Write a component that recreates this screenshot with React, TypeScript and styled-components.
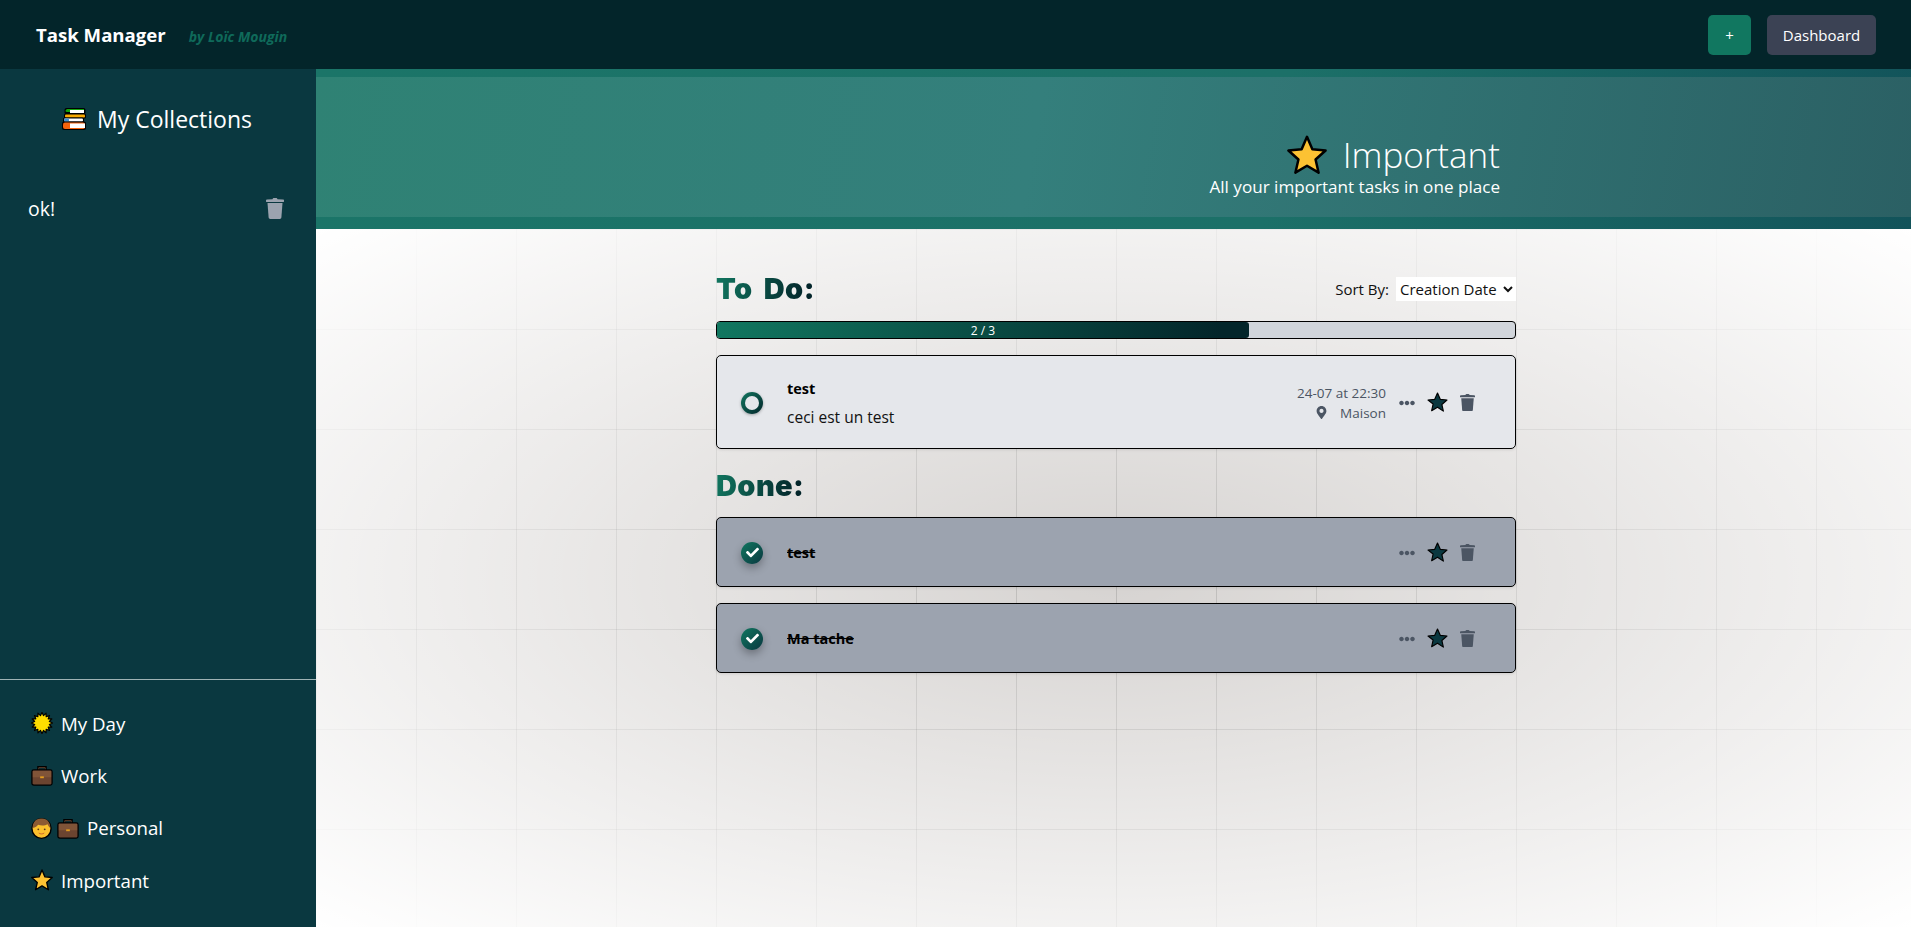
import React from 'react'
import styled, { createGlobalStyle } from 'styled-components'
import { FaEllipsisH, FaMapMarkerAlt, FaCheck } from 'react-icons/fa'

const GlobalStyle = createGlobalStyle`
  html, body {
    margin: 0;
    padding: 0;
    height: 100%;
    overflow: hidden;
    font-family: "Open Sans", "Noto Sans", sans-serif;
  }
  * {
    box-sizing: border-box;
  }
`

const TrashIcon = ({ size = 18 }: { size?: number }) => (
  <svg width={size} height={size * 1.17} viewBox="0 0 18 21" fill="currentColor">
    <path d="M6.500 1.200C6.700.5 7.200 0 8 0h2c.8 0 1.300.5 1.500 1.200L17 1.600c.6 0 1 .4 1 .9v1c0 .2-.2.4-.4.4H.4C.2 3.900 0 3.700 0 3.500v-1c0-.5.4-.9 1-.9z" />
    <path d="M1.500 5h15l-1.100 14.200c-.1 1-.9 1.800-1.900 1.800h-9c-1 0-1.800-.8-1.900-1.800z" />
  </svg>
)

const StarIcon = ({ size = 23 }: { size?: number }) => (
  <svg width={size} height={size} viewBox="0 0 24 24">
    <path
      d="M12 2.200l2.900 6.500 7 .7-5.300 4.700 1.500 6.900L12 16.900l-6.100 3.600 1.500-6.900L2.100 9.400l7-.7z"
      fill="#0a3840"
      stroke="#000"
      strokeWidth="1.200"
      strokeLinejoin="round"
    />
  </svg>
)

const EmojiStar = ({ size = 22 }: { size?: number }) => (
  <svg width={size} height={size} viewBox="0.800 0.800 22.400 22.400">
    <path
      d="M12 1.800l3 7 7.400.7-5.600 5 1.700 7.400-6.500-3.900-6.500 3.900 1.700-7.400-5.600-5 7.400-.7z"
      fill="#fcc233"
      stroke="#000"
      strokeWidth="1.400"
      strokeLinejoin="round"
    />
  </svg>
)

const sunPoints = Array.from({ length: 32 }, (_, i) => {
  const radius = i % 2 === 0 ? 11.6 : 8.2
  const angle = (i * Math.PI) / 16
  return `${(12 + radius * Math.sin(angle)).toFixed(2)},${(12 - radius * Math.cos(angle)).toFixed(2)}`
}).join(' ')

const EmojiSun = () => (
  <svg width={22} height={22} viewBox="0 0 24 24">
    <polygon points={sunPoints} fill="#ffdd00" stroke="#000" strokeWidth="1.300" strokeLinejoin="round" />
  </svg>
)

const EmojiBriefcase = () => (
  <svg width={22} height={22} viewBox="0 0 24 24">
    <path d="M8 7V3.500h8V7" fill="none" stroke="#000" strokeWidth="2.400" />
    <path d="M8.500 7V4h7v3" fill="none" stroke="#6a4530" strokeWidth="1" />
    <rect x="1" y="6.500" width="22" height="16.500" rx="2" fill="#6b4430" stroke="#000" strokeWidth="1.400" />
    <rect x="2" y="7.500" width="20" height="7" fill="#805438" />
    <rect x="10" y="13.500" width="4" height="2" fill="#e39c1d" />
  </svg>
)

const EmojiBoy = () => (
  <svg width={21} height={22} viewBox="0 0 23 24">
    <ellipse cx="11.500" cy="12.500" rx="10.500" ry="10.800" fill="#fbc02d" stroke="#000" strokeWidth="1.500" />
    <path d="M1.800 12C1.800 5 6 1.600 11.500 1.600S21.200 5 21.200 12c-1.500-.7-2.500-2.500-3-4-3 1.700-7.500 1.700-10.500.5-.8 1.500-3 3.100-5.900 3.500z" fill="#8d5a33" />
    <circle cx="8" cy="13.500" r="1" fill="#5d3a1e" />
    <circle cx="15" cy="13.500" r="1" fill="#5d3a1e" />
    <path d="M8.500 17.500c1.800 1.300 4.200 1.300 6 0" fill="none" stroke="#c9612c" strokeWidth="1" />
  </svg>
)

const EmojiBooks = () => (
  <svg width={24} height={24} viewBox="0 0 24 24">
    <rect x="2.500" y="1" width="21" height="6.500" rx="2" fill="#000" />
    <path d="M3.500 4c0-1 .8-2 2-2H22v1.200H8v1.800H5.500C4.500 5 3.500 4.800 3.500 4z" fill="#13a10e" />
    <rect x="8" y="3" width="14" height="3" fill="#fff" />
    <rect x="2" y="6.500" width="22" height="5" rx="1.500" fill="#000" />
    <rect x="3" y="7.500" width="20" height="3" rx="1" fill="#f7a800" />
    <rect x="1" y="10.500" width="21" height="5" rx="1.500" fill="#000" />
    <rect x="2" y="11.500" width="19" height="3" rx="1" fill="#fff" />
    <rect x="2" y="11.500" width="5" height="3" rx="1" fill="#3f8fd2" />
    <rect x="0" y="14.500" width="24" height="8.500" rx="2" fill="#000" />
    <rect x="1" y="15.500" width="22" height="6.500" rx="2" fill="#f7630c" />
    <rect x="8" y="16.500" width="15" height="4.500" fill="#fff" />
  </svg>
)

const Page = styled.div`
  display: flex;
  flex-direction: column;
  width: 100%;
  height: 927px;
  overflow: hidden;
`

const Navbar = styled.header`
  height: 69px;
  flex: none;
  display: flex;
  align-items: center;
  justify-content: space-between;
  padding: 0 35px 0 36px;
  background-color: #03252a;
`

const Brand = styled.div`
  display: flex;
  align-items: baseline;
  gap: 23px;
`

const BrandTitle = styled.span`
  color: #fff;
  font-size: 18.600px;
  font-weight: 700;
`

const BrandBy = styled.span`
  color: #0f6a5a;
  font-size: 14px;
  font-weight: 700;
  font-style: italic;
`

const NavActions = styled.div`
  display: flex;
  gap: 16px;
`

const NavButton = styled.button<{ $variant: 'add' | 'link' }>`
  height: 40px;
  width: ${(props) => (props.$variant === 'add' ? '43px' : '109px')};
  padding: 0;
  border: none;
  border-radius: 5px;
  color: #fff;
  font-family: inherit;
  font-size: 15px;
  background-color: ${(props) => (props.$variant === 'add' ? '#117760' : '#3b4254')};
`

const Body = styled.div`
  flex: 1;
  display: flex;
  min-height: 0;
`

const Sidebar = styled.aside`
  width: 316px;
  flex: none;
  display: flex;
  flex-direction: column;
  background-color: #0a3840;
  color: #fff;
`

const SidebarTop = styled.div`
  flex: 1;
  padding: 0 28px;
`

const CollectionsTitle = styled.h2`
  display: flex;
  align-items: center;
  justify-content: center;
  gap: 11px;
  margin: 0;
  padding: 10px 2px 0 0;
  height: 90px;
  font-size: 23px;
  font-weight: 400;
`

const CollectionRow = styled.div`
  display: flex;
  align-items: center;
  justify-content: space-between;
  margin-top: 36px;
  padding-right: 4px;
  font-size: 19.500px;
  color: #fff;
`

const CollectionTrash = styled.span`
  display: flex;
  color: #9ca3af;
`

const SidebarBottom = styled.nav`
  height: 248px;
  flex: none;
  border-top: 1px solid #9fb3b5;
  padding: 17px 0 0 31px;
  display: flex;
  flex-direction: column;
`

const NavItem = styled.div`
  height: 52.300px;
  display: flex;
  align-items: center;
  gap: 8px;
  font-size: 18.700px;
`

const NavIcons = styled.span`
  display: flex;
  gap: 5px;
`

const Main = styled.main`
  flex: 1;
  min-width: 0;
  display: flex;
  flex-direction: column;
`

const Banner = styled.section`
  height: 160px;
  flex: none;
  padding: 8px 0 12px;
  background: linear-gradient(100deg, #1b7568 0%, #1c7068 60%, #12535a 100%);
`

const BannerInner = styled.div`
  height: 100%;
  display: flex;
  flex-direction: column;
  align-items: flex-end;
  justify-content: flex-end;
  padding: 0 411px 20px 0;
  color: #fff;
  background: linear-gradient(100deg, #2f8274 0%, #347f7c 45%, #2b6064 100%);
`

const BannerTitle = styled.h1`
  display: flex;
  align-items: center;
  gap: 16px;
  margin: 0;
  font-size: 35px;
  font-weight: 300;
  line-height: 44px;
`

const BannerSub = styled.p`
  margin: 0;
  font-size: 17.100px;
  font-weight: 400;
  line-height: 20px;
`

// the fade sits on top of the grid lines, so the lines die out towards the corners
const Content = styled.div`
  flex: 1;
  padding: 40px 0 0 400px;
  background-color: #d6d3d1;
  background-image:
    radial-gradient(ellipse farthest-corner at 50% 50%, rgba(255, 255, 255, 0), #fff),
    linear-gradient(to right, rgba(0, 0, 0, 0.13) 1px, transparent 1px),
    linear-gradient(to bottom, rgba(0, 0, 0, 0.13) 1px, transparent 1px);
  background-size: 100% 100%, 100px 100px, 100px 100px;
`

const Column = styled.div`
  width: 800px;
`

const SectionHeader = styled.div`
  height: 40px;
  display: flex;
  align-items: center;
  justify-content: space-between;
`

const DoneHeader = styled(SectionHeader)`
  height: 33px;
  margin-top: 20px;
  margin-bottom: -1px;
`

const SectionTitle = styled.h3`
  display: inline-block;
  margin: 0;
  font-family: Inter, "Open Sans", sans-serif;
  font-size: 29px;
  font-weight: 900;
  letter-spacing: 0.4px;
  word-spacing: 5px;
  line-height: 40px;
  color: transparent;
  background: linear-gradient(100deg, #117760 0%, #03252a 90%);
  -webkit-background-clip: text;
  background-clip: text;
`

const SortBox = styled.label`
  display: flex;
  align-items: center;
  gap: 7px;
  font-size: 15px;
  color: #111;
`

const SortSelect = styled.select`
  width: 120px;
  height: 24px;
  border: none;
  padding: 0;
  background-color: #fff;
  font-family: inherit;
  font-size: 15px;
  color: #111;
`

const Progress = styled.div`
  height: 18px;
  margin-top: 12px;
  border: 1.500px solid #000;
  border-radius: 4px;
  background-color: #d1d5db;
  overflow: hidden;
`

const ProgressFill = styled.div`
  height: 100%;
  border-radius: 0 3px 3px 0;
  display: flex;
  align-items: center;
  justify-content: center;
  color: #fff;
  font-size: 12px;
  background: linear-gradient(to right, #117760, #03252a 95%);
`

const Card = styled.article<{ $done?: boolean }>`
  height: ${(props) => (props.$done ? '70px' : '94px')};
  margin-top: 16px;
  display: flex;
  align-items: center;
  padding: 1px 40px 0 24px;
  border: 1.500px solid #000;
  border-radius: 5px;
  background-color: ${(props) => (props.$done ? '#9ca3af' : '#e5e7eb')};
  box-shadow: 0 1px 3px rgba(0, 0, 0, 0.1);
`

const CircleOpen = styled.span`
  width: 22px;
  height: 22px;
  flex: none;
  border-radius: 50%;
  padding: 4px;
  background: linear-gradient(135deg, #117760, #03252a);
  box-shadow: 0 1px 3px rgba(0, 0, 0, 0.3);

  &::after {
    content: '';
    display: block;
    width: 100%;
    height: 100%;
    border-radius: 50%;
    background-color: #e5e7eb;
  }
`

const CircleDone = styled.span`
  width: 22px;
  height: 22px;
  flex: none;
  border-radius: 50%;
  display: flex;
  align-items: center;
  justify-content: center;
  color: #fff;
  font-size: 13px;
  background: linear-gradient(135deg, #117760, #0a3840);
  box-shadow: 0 4px 8px rgba(0, 0, 0, 0.3);
`

const CardText = styled.div`
  flex: 1;
  margin-left: 24px;
  color: #000;
`

const CardTitle = styled.div<{ $done?: boolean }>`
  font-size: 14.500px;
  font-weight: 700;
  line-height: 20px;
  text-decoration: ${(props) => (props.$done ? 'line-through' : 'none')};
`

const CardDesc = styled.div`
  margin-top: 8px;
  font-size: 15.500px;
  line-height: 20px;
  color: #111;
`

const CardMeta = styled.div`
  display: flex;
  flex-direction: column;
  align-items: flex-end;
  gap: 2px;
  font-size: 13.500px;
  line-height: 18px;
  color: #4b5563;
`

const MetaPlace = styled.div`
  display: flex;
  align-items: center;
  gap: 12px;
`

const CardActions = styled.div`
  display: flex;
  align-items: center;
  margin-left: 13px;
  color: #4b5563;
`

const DotsButton = styled.span`
  display: flex;
  width: 16px;
  justify-content: center;
`

const StarButton = styled.span`
  display: flex;
  margin-left: 11px;
`

const TrashButton = styled.span`
  display: flex;
  margin-left: 11px;
`

const navItems = [
  { label: 'My Day', icons: [<EmojiSun key="sun" />] },
  { label: 'Work', icons: [<EmojiBriefcase key="case" />] },
  { label: 'Personal', icons: [<EmojiBoy key="boy" />, <EmojiBriefcase key="case" />] },
  { label: 'Important', icons: [<EmojiStar key="star" />] },
]

const TaskActions = () => (
  <CardActions>
    <DotsButton>
      <FaEllipsisH size={16} />
    </DotsButton>
    <StarButton>
      <StarIcon />
    </StarButton>
    <TrashButton>
      <TrashIcon size={15} />
    </TrashButton>
  </CardActions>
)

const DoneCard = ({ title }: { title: string }) => (
  <Card $done>
    <CircleDone>
      <FaCheck />
    </CircleDone>
    <CardText>
      <CardTitle $done>{title}</CardTitle>
    </CardText>
    <TaskActions />
  </Card>
)

export default function App() {
  return (
    <Page>
      <GlobalStyle />
      <Navbar>
        <Brand>
          <BrandTitle>Task Manager</BrandTitle>
          <BrandBy>by Loïc Mougin</BrandBy>
        </Brand>
        <NavActions>
          <NavButton $variant="add">+</NavButton>
          <NavButton $variant="link">Dashboard</NavButton>
        </NavActions>
      </Navbar>
      <Body>
        <Sidebar>
          <SidebarTop>
            <CollectionsTitle>
              <EmojiBooks />
              My Collections
            </CollectionsTitle>
            <CollectionRow>
              ok!
              <CollectionTrash>
                <TrashIcon />
              </CollectionTrash>
            </CollectionRow>
          </SidebarTop>
          <SidebarBottom>
            {navItems.map((item) => (
              <NavItem key={item.label}>
                <NavIcons>{item.icons}</NavIcons>
                {item.label}
              </NavItem>
            ))}
          </SidebarBottom>
        </Sidebar>
        <Main>
          <Banner>
            <BannerInner>
              <BannerTitle>
                <EmojiStar size={40} />
                Important
              </BannerTitle>
              <BannerSub>All your important tasks in one place</BannerSub>
            </BannerInner>
          </Banner>
          <Content>
            <Column>
              <SectionHeader>
                <SectionTitle>To Do:</SectionTitle>
                <SortBox>
                  Sort By:
                  <SortSelect defaultValue="creation">
                    <option value="creation">Creation Date</option>
                  </SortSelect>
                </SortBox>
              </SectionHeader>
              <Progress>
                <ProgressFill style={{ width: `${(2 / 3) * 100}%` }}>2 / 3</ProgressFill>
              </Progress>
              <Card>
                <CircleOpen />
                <CardText>
                  <CardTitle>test</CardTitle>
                  <CardDesc>ceci est un test</CardDesc>
                </CardText>
                <CardMeta>
                  <span>24-07 at 22:30</span>
                  <MetaPlace>
                    <FaMapMarkerAlt size={13} />
                    Maison
                  </MetaPlace>
                </CardMeta>
                <TaskActions />
              </Card>
              <DoneHeader>
                <SectionTitle>Done:</SectionTitle>
              </DoneHeader>
              <DoneCard title="test" />
              <DoneCard title="Ma tache" />
            </Column>
          </Content>
        </Main>
      </Body>
    </Page>
  )
}
